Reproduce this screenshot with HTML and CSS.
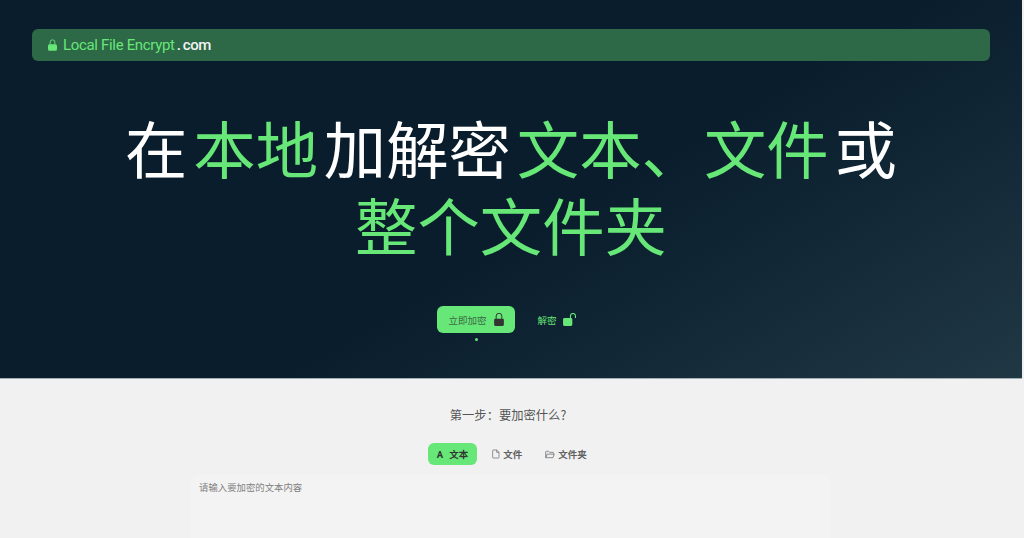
FILE: index.html
```html
<!DOCTYPE html>
<html lang="zh-CN">
<head>
<meta charset="utf-8">
<title>Local File Encrypt</title>
<link rel="stylesheet" href="styles.css">
</head>
<body>
<div class="page">
  <header class="hero">
    <nav class="brandbar">
      <svg class="brand-lock" viewBox="0 0 12 15" aria-hidden="true"><path class="fill-green" d="M2 6.500h8a2 2 0 0 1 2 2V13a2 2 0 0 1-2 2H2a2 2 0 0 1-2-2V8.500a2 2 0 0 1 2-2z"/><path class="stroke-green" d="M2.800 7V3.800a3.200 3.200 0 0 1 6.400 0V7"/></svg>
      <span class="brand-name">Local File Encrypt</span>
      <span class="brand-tld">. com</span>
    </nav>
    <h1 class="headline">
      <span class="line">在<i class="sp"></i><em>本地</em><i class="sp"></i>加解密<i class="sp"></i><em>文本、文件</em><i class="sp"></i>或</span>
      <span class="line"><em>整个文件夹</em></span>
    </h1>
    <div class="actions">
      <div class="action-col">
        <button class="btn btn-primary">立即加密
          <svg class="btn-icon" viewBox="0 0 12 16" aria-hidden="true"><path class="fill-dark" d="M1.500 7h9A1.500 1.500 0 0 1 12 8.500V14a2 2 0 0 1-2 2H2a2 2 0 0 1-2-2V8.500A1.500 1.500 0 0 1 1.500 7z"/><path class="stroke-dark" d="M2.500 7.500V3.800a3.500 3.500 0 0 1 7 0v3.700"/></svg>
        </button>
        <span class="dot"></span>
      </div>
      <button class="btn btn-ghost">解密
        <svg class="btn-icon-open" viewBox="0 0 15 14" aria-hidden="true"><path class="fill-green" d="M1.500 5.500h7A1.500 1.500 0 0 1 10 7v5a2 2 0 0 1-2 2H2a2 2 0 0 1-2-2V7a1.500 1.500 0 0 1 1.500-1.500z"/><path class="stroke-green" d="M8 6V3.200a2.700 2.700 0 0 1 5.400 0V5.500"/></svg>
      </button>
    </div>
  </header>
  <main class="content">
    <h2 class="step">第一步：要加密什么?</h2>
    <div class="tabs">
      <button class="tab tab-active"><span class="tab-a">A</span>文本</button>
      <button class="tab">
        <svg class="tab-icon" viewBox="0 0 12 14" aria-hidden="true"><path d="M2 1h5l3.500 3.500V12a1 1 0 0 1-1 1H2a1 1 0 0 1-1-1V2a1 1 0 0 1 1-1z"/><path d="M7 1v3.500h3.500"/></svg>文件</button>
      <button class="tab tab-last">
        <svg class="tab-icon-wide" viewBox="0 0 14 12" aria-hidden="true"><path d="M1 10V2.500a1 1 0 0 1 1-1h3l1.500 1.500H11a1 1 0 0 1 1 1v1"/><path d="M1 10.500l2-5h10l-2 5z"/></svg>文件夹</button>
    </div>
    <div class="textbox"><span class="placeholder">请输入要加密的文本内容</span></div>
  </main>
</div>
</body>
</html>
```
FILE: styles.css
```css
* { box-sizing: border-box; }
html, body { margin: 0; padding: 0; height: 538px; overflow: hidden; background: #f1f1f1; }
body { font-family: Roboto, "Noto Sans CJK SC", sans-serif; }
.page { width: 1022px; height: 538px; overflow: hidden; }
.hero {
  height: 379px;
  border-bottom: 1px solid #a3adb5;
  background: linear-gradient(150deg, #091d2c 0%, #091d2c 55%, #203744 100%);
  padding: 29px 32px 0;
  display: flex;
  flex-direction: column;
  align-items: center;
}
.brandbar {
  align-self: stretch;
  height: 32px;
  background: #2d6847;
  border-radius: 6px;
  display: flex;
  align-items: center;
  padding-left: 16px;
  font-size: 15px;
  font-weight: 400;
}
.brand-lock { width: 9px; height: 12px; margin-right: 6px; }
.brand-name { color: #66e777; letter-spacing: -0.33px; }
.brand-tld { color: #f2f2f2; margin-left: 2px; white-space: pre; font-weight: 500; letter-spacing: -0.4px; word-spacing: -1px; }
.fill-green { fill: #66e777; }
.stroke-green { fill: none; stroke: #66e777; stroke-width: 1.200; }
.fill-dark { fill: #333; }
.stroke-dark { fill: none; stroke: #333; stroke-width: 1.200; }
.headline {
  margin: 48px 0 0;
  font-size: 62.400px;
  font-weight: 400;
  line-height: 77px;
  color: #fff;
  text-align: center;
  font-family: "Noto Sans CJK SC", sans-serif;
}
.line { display: block; white-space: nowrap; }
.headline em { font-style: normal; color: #66e777; }
.sp { display: inline-block; width: 5.800px; }
.actions { display: flex; align-items: flex-start; gap: 12px; margin-top: 43px; margin-left: 2px; }
.action-col { display: flex; flex-direction: column; align-items: center; }
.btn {
  height: 27px;
  border: 0;
  border-radius: 6px;
  font-family: "Noto Sans CJK SC", sans-serif;
  font-size: 9.500px;
  display: flex;
  align-items: center;
  padding: 0;
}
.btn-primary { width: 78px; background: #66e777; color: #3d6a48; justify-content: center; gap: 7px; }
.btn-ghost { width: 60px; background: transparent; color: #66e777; justify-content: center; gap: 6px; }
.btn-icon { width: 10px; height: 13px; }
.btn-icon-open { width: 14px; height: 13px; }
.dot { width: 3px; height: 3px; border-radius: 50%; background: #66e777; margin-top: 5px; }
.content { display: flex; flex-direction: column; align-items: center; }
.step {
  margin: 26px 6px 0 0;
  font-size: 12.300px;
  line-height: 20px;
  font-weight: 400;
  color: #555;
  font-family: "Noto Sans CJK SC", sans-serif;
}
.tabs { display: flex; gap: 0; margin-top: 18px; margin-left: 1.500px; }
.tab {
  height: 22px;
  border: 0;
  border-radius: 6px;
  background: transparent;
  color: #606060;
  font-family: "Noto Sans CJK SC", sans-serif;
  font-size: 9.500px;
  font-weight: 700;
  display: flex;
  align-items: center;
  padding: 0 9px;
  margin-right: 5px;
}
.tab-last { margin-right: 0; }
.tab-active { background: #66e777; color: #333; padding-left: 9px; margin-right: 6px; }
.tab-a { font-family: Roboto, sans-serif; margin-right: 6px; }
.tab-icon { width: 8px; height: 10px; margin-right: 3px; fill: none; stroke: #606060; stroke-width: 1; }
.tab-icon-wide { width: 10px; height: 9px; margin-right: 3px; fill: none; stroke: #606060; stroke-width: 1; }
.textbox {
  width: 640px;
  height: 80px;
  margin-top: 10px;
  background: #f3f3f3;
  border-radius: 8px;
  padding: 1px 8px;
}
.placeholder { font-family: "Noto Sans CJK SC", sans-serif; font-size: 9.400px; color: #808080; }
```
